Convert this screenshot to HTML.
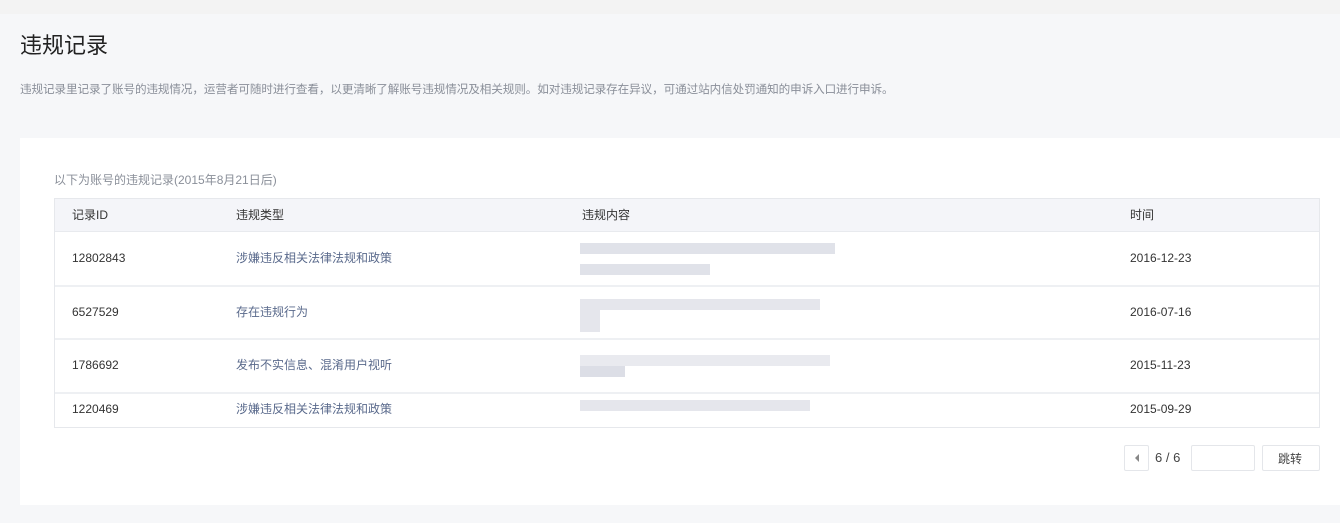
<!DOCTYPE html>
<html><head><meta charset="utf-8"><style>
*{margin:0;padding:0;box-sizing:border-box}
body{width:1340px;height:523px;background:#f6f7f9;font-family:"Liberation Sans","Noto Sans CJK SC",sans-serif;position:relative;overflow:hidden;color:#333}
.a{position:absolute;white-space:nowrap}
.top{left:0;top:0;width:1340px;height:14px;background:#f3f3f3}
h1{position:absolute;left:20px;top:28px;font-size:22px;font-weight:normal;color:#222}
.desc{left:20px;top:81px;font-size:11.6px;color:#8a8f99;letter-spacing:-0.1px}
.card{left:20px;top:138px;width:1320px;height:367px;background:#fff}
.sub{left:54px;top:171px;font-size:12px;color:#8a8f99}
.tbl{left:54px;top:198px;width:1266px;height:230px;border:1px solid #e6e8ec}
.hd{left:55px;top:199px;width:1264px;height:33px;background:#f4f5f9;border-bottom:1px solid #e8eaee}
.line{left:55px;width:1264px;height:2px;background:#eef0f3}
.t{font-size:12px}
.h{color:#333;top:206px}
.ty{color:#5a6a8c}
.blk{position:absolute;background:#d3d6e0}
.btn{border:1px solid #e4e6ea;border-radius:2px;background:#fff}
</style></head><body>
<div class="a top"></div>
<h1>违规记录</h1>
<div class="a desc">违规记录里记录了账号的违规情况，运营者可随时进行查看，以更清晰了解账号违规情况及相关规则。如对违规记录存在异议，可通过站内信处罚通知的申诉入口进行申诉。</div>
<div class="a card"></div>
<div class="a sub">以下为账号的违规记录(2015年8月21日后)</div>
<div class="a tbl"></div>
<div class="a hd"></div>
<div class="a t h" style="left:72px">记录ID</div>
<div class="a t h" style="left:236px">违规类型</div>
<div class="a t h" style="left:582px">违规内容</div>
<div class="a t h" style="left:1130px">时间</div>
<div class="a line" style="top:285px"></div>
<div class="a line" style="top:338px"></div>
<div class="a line" style="top:392px"></div>

<div class="a t" style="left:72px;top:251px">12802843</div>
<div class="a t ty" style="left:236px;top:249px">涉嫌违反相关法律法规和政策</div>
<div class="a t" style="left:1130px;top:251px">2016-12-23</div>
<div class="a t" style="left:72px;top:305px">6527529</div>
<div class="a t ty" style="left:236px;top:303px">存在违规行为</div>
<div class="a t" style="left:1130px;top:305px">2016-07-16</div>
<div class="a t" style="left:72px;top:358px">1786692</div>
<div class="a t ty" style="left:236px;top:356px">发布不实信息、混淆用户视听</div>
<div class="a t" style="left:1130px;top:358px">2015-11-23</div>
<div class="a t" style="left:72px;top:402px">1220469</div>
<div class="a t ty" style="left:236px;top:400px">涉嫌违反相关法律法规和政策</div>
<div class="a t" style="left:1130px;top:402px">2015-09-29</div>

<div class="blk" style="left:580px;top:243px;width:255px;height:11px;opacity:.7"></div>
<div class="blk" style="left:580px;top:264px;width:130px;height:11px;opacity:.7"></div>
<div class="blk" style="left:580px;top:299px;width:240px;height:11px;opacity:.6"></div>
<div class="blk" style="left:580px;top:310px;width:20px;height:22px;opacity:.6"></div>
<div class="blk" style="left:580px;top:355px;width:250px;height:11px;opacity:.5"></div>
<div class="blk" style="left:580px;top:366px;width:45px;height:11px;opacity:.8"></div>
<div class="blk" style="left:580px;top:400px;width:230px;height:11px;opacity:.6"></div>

<div class="a btn" style="left:1124px;top:445px;width:25px;height:26px"></div>
<svg class="a" style="left:1133px;top:453px" width="8" height="10"><path d="M6 1L2 5L6 9Z" fill="#888"/></svg>
<div class="a" style="left:1155px;top:450px;font-size:13px;color:#444">6 / 6</div>
<div class="a btn" style="left:1191px;top:445px;width:64px;height:26px"></div>
<div class="a btn" style="left:1262px;top:445px;width:58px;height:26px"></div>
<div class="a" style="left:1278px;top:450px;font-size:12px;color:#444">跳转</div>
</body></html>
